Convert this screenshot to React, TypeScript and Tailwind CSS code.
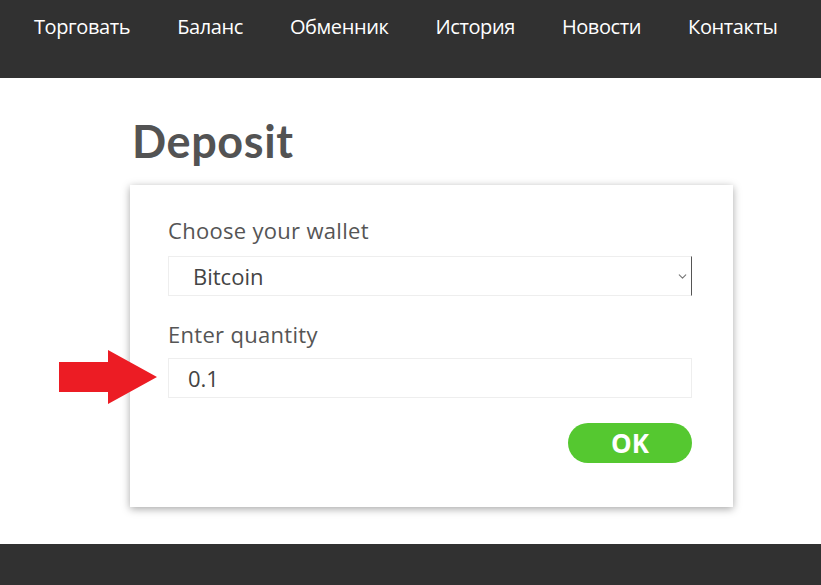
import { ChevronDown } from 'lucide-react'

const navItems = ['Торговать', 'Баланс', 'Обменник', 'История', 'Новости', 'Контакты']

const App = () => {
  return (
    <div className="min-h-screen bg-white flex flex-col" style={{ fontFamily: '"Open Sans", "Noto Sans", sans-serif' }}>
      <header className="bg-[#313131] h-[78px] shrink-0">
        <nav className="flex gap-[47px] pl-[34px] pt-[13px]">
          {navItems.map((item) => (
            <a key={item} className="text-white text-[20px] leading-[28px] tracking-[-0.4px]">
              {item}
            </a>
          ))}
        </nav>
      </header>

      <main className="flex-1 h-[466px] shrink-0">
        <div className="w-[603px] ml-[130px] pt-[35px]">
          <h1 className="text-[#535353] text-[45px] leading-[56px] font-bold pl-[2px] tracking-[0.6px]" style={{ fontFamily: 'Lato, sans-serif' }}>
            Deposit
          </h1>
          <div className="relative mt-[16px] bg-white shadow-[0_2px_8px_rgba(0,0,0,0.35)] h-[322px] pl-[38px] pr-[41px] pt-[31px]">
            <label className="block text-[#555] text-[22px] leading-[28px] tracking-[0.3px]">Choose your wallet</label>
            <div className="relative mt-[12px] h-[40px] border border-[#eee] border-r-[#555] flex items-center pl-[24px]">
              <span className="text-[#444] text-[22px]">Bitcoin</span>
              <ChevronDown className="absolute right-[2px] w-[13px] h-[13px] text-[#777]" strokeWidth={2} />
            </div>
            <label className="block mt-[24px] text-[#555] text-[22px] leading-[28px] tracking-[0.3px]">Enter quantity</label>
            <div className="mt-[10px] h-[40px] border border-[#eee] flex items-center pl-[19px]">
              <span className="text-[#444] text-[22px]">0.1</span>
            </div>
            <div className="flex justify-end mt-[25px]">
              <button className="w-[124px] h-[40px] rounded-full bg-[#55c830] text-white text-[26px] font-bold leading-none">
                OK
              </button>
            </div>

            <svg className="absolute left-[-71px] top-[165px]" width="99" height="55" viewBox="0 0 99 55">
              <polygon points="0,12 49,12 49,0 98,27 49,54 49,42 0,42" fill="#ec1c24" />
            </svg>
          </div>
        </div>
      </main>

      <footer className="bg-[#313131] h-[41px] shrink-0" />
    </div>
  )
}

export default App
